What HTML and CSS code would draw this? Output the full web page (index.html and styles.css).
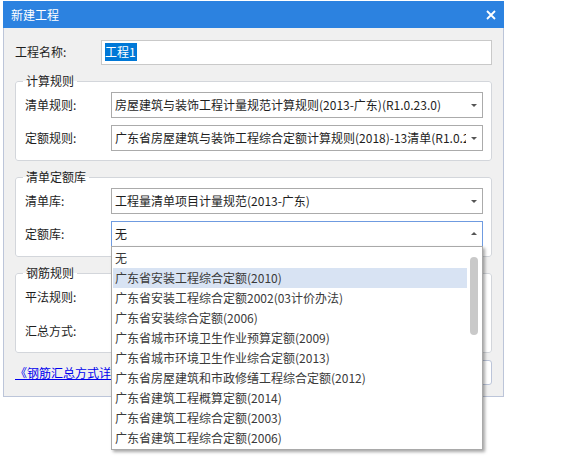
FILE: index.html
```html
<!DOCTYPE html>
<html lang="zh-CN">
<head>
<meta charset="utf-8">
<title>新建工程</title>
<link rel="stylesheet" href="styles.css">
</head>
<body>
<div class="dialog">
  <div class="titlebar">
    <span class="title">新建工程</span>
    <svg class="close" width="10" height="10" viewBox="0 0 10 10"><path d="M1 1L9 9M9 1L1 9" stroke="#fff" stroke-width="1.8" fill="none"/></svg>
  </div>
  <div class="body">
    <div class="row">
      <span class="lbl">工程名称:</span>
      <div class="textbox"><span class="selected">工程1</span></div>
    </div>

    <fieldset class="group">
      <legend>计算规则</legend>
      <div class="row">
        <span class="lbl">清单规则:</span>
        <div class="combo"><span class="val">房屋建筑与装饰工程计量规范计算规则(2013-广东)(R1.0.23.0)</span><i class="arrow down"></i></div>
      </div>
      <div class="row">
        <span class="lbl">定额规则:</span>
        <div class="combo"><span class="val">广东省房屋建筑与装饰工程综合定额计算规则(2018)-13清单(R1.0.23.0)</span><i class="arrow down"></i></div>
      </div>
    </fieldset>

    <fieldset class="group">
      <legend>清单定额库</legend>
      <div class="row">
        <span class="lbl">清单库:</span>
        <div class="combo"><span class="val">工程量清单项目计量规范(2013-广东)</span><i class="arrow down"></i></div>
      </div>
      <div class="row">
        <span class="lbl">定额库:</span>
        <div class="combo focused"><span class="val">无</span><i class="arrow up"></i>
          <div class="dropdown">
            <ul class="items">
              <li>无</li>
              <li class="hl">广东省安装工程综合定额(2010)</li>
              <li>广东省安装工程综合定额2002(03计价办法)</li>
              <li>广东省安装综合定额(2006)</li>
              <li>广东省城市环境卫生作业预算定额(2009)</li>
              <li>广东省城市环境卫生作业综合定额(2013)</li>
              <li>广东省房屋建筑和市政修缮工程综合定额(2012)</li>
              <li>广东省建筑工程概算定额(2014)</li>
              <li>广东省建筑工程综合定额(2003)</li>
              <li>广东省建筑工程综合定额(2006)</li>
            </ul>
            <div class="scrollbar"><div class="thumb"></div></div>
          </div>
        </div>
      </div>
    </fieldset>

    <fieldset class="group group3">
      <legend>钢筋规则</legend>
      <div class="row">
        <span class="lbl">平法规则:</span>
        <div class="combo"><span class="val">16系平法规则</span><i class="arrow down"></i></div>
      </div>
      <div class="row">
        <span class="lbl">汇总方式:</span>
        <div class="combo"><span class="val">按照钢筋图示尺寸-即外皮汇总</span><i class="arrow down"></i></div>
      </div>
    </fieldset>

    <div class="footer">
      <a class="link" href="#">《钢筋汇总方式详细说明》</a>
      <button class="btn">创建工程</button>
    </div>
  </div>
</div>
</body>
</html>
```

FILE: styles.css
```css
* { box-sizing: border-box; }
html, body { margin: 0; padding: 0; background: #fff; }
html { height: 100%; }
body {
  min-height: 100%;
  font-family: "Noto Sans CJK SC", "Noto Sans", sans-serif;
  font-size: 12px;
  color: #1e1e1e;
}
.dialog {
  width: 501px;
  margin: 1px 0 0 3px;
}
.titlebar {
  height: 27px;
  background: #2c82e0;
  color: #fff;
  display: flex;
  align-items: center;
  justify-content: space-between;
  padding: 0 8px 0 8px;
  line-height: 16px;
}
.title { font-size: 12px; }
.close { display: block; }
.body {
  background: #f0f0f0;
  border: 1px solid #bcc5d9;
  border-top: none;
  padding: 11px;
}
.row {
  display: flex;
  align-items: center;
  height: 26px;
}
.lbl {
  width: 86px;
  flex: none;
  line-height: 16px;
}
.textbox {
  flex: 1;
  height: 25px;
  background: #fff;
  border: 1px solid #c9c9c9;
  padding: 0 3px;
  display: flex;
  align-items: center;
}
.selected {
  background: #0078d7;
  color: #fff;
  line-height: 18px;
  height: 18px;
  padding: 0 1px 0 0;
}
.group {
  margin: 8px 0 0 0;
  border: 1px solid #d3d6db;
  border-radius: 3px;
  background: #fff;
  padding: 3px 8px 9px 9px;
  min-width: 0;
  display: flex;
  flex-direction: column;
  gap: 7px;
}
.group3 { gap: 8px; padding-bottom: 8px; }
.group legend {
  margin-left: -2px;
  padding: 0 3px;
  line-height: 16px;
  font-size: 12px;
}
.combo {
  position: relative;
  flex: 1;
  min-width: 0;
  height: 26px;
  background: #fff;
  border: 1px solid #ababab;
  display: flex;
  align-items: center;
  padding: 0 16px 0 3px;
}
.combo.focused { border-color: #6f9be0; }
.val {
  white-space: nowrap;
  overflow: hidden;
  line-height: 16px;
  color: #1e1e1e;
}
.arrow {
  position: absolute;
  right: 5px;
  width: 0;
  height: 0;
  border-left: 3px solid transparent;
  border-right: 3px solid transparent;
}
.arrow.down { border-top: 3px solid #555; top: 11px; }
.arrow.up { border-bottom: 3px solid #555; top: 10px; }
.dropdown {
  position: absolute;
  left: -1px;
  top: 100%;
  width: 372px;
  height: 204px;
  background: #fff;
  border: 1px solid #a9a9a9;
  box-shadow: 2px 2px 3px rgba(0, 0, 0, 0.35);
  display: flex;
  z-index: 10;
  overflow: hidden;
}
.items {
  list-style: none;
  margin: 0;
  padding: 1px 0 0 1px;
  flex: 1;
  min-width: 0;
}
.items li {
  height: 20px;
  line-height: 20px;
  padding-left: 2px;
  color: #3a3a3a;
  white-space: nowrap;
  overflow: hidden;
}
.items li.hl { background: #d8e3f3; }
.scrollbar {
  width: 15px;
  flex: none;
  padding: 10px 3px 0 3px;
}
.thumb {
  width: 8px;
  height: 78px;
  background: #c9c9c9;
  border-radius: 4px;
}
.footer {
  margin-top: 7px;
  height: 25px;
  display: flex;
  align-items: center;
  justify-content: space-between;
}
.link {
  color: #0000ee;
  text-decoration: underline;
  line-height: 16px;
}
.btn {
  width: 90px;
  height: 25px;
  border: 1px solid #bcc5d9;
  border-radius: 3px;
  background: #fff;
  font: inherit;
  color: #1e1e1e;
}
```
